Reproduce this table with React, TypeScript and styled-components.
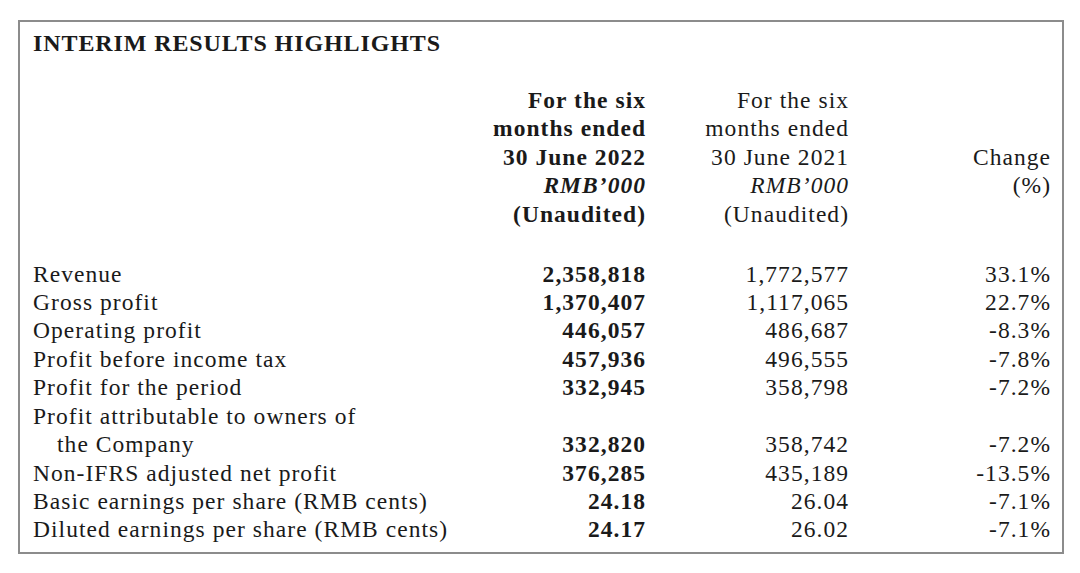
import React from "react";
import styled, { createGlobalStyle } from "styled-components";

const Global = createGlobalStyle`
  html, body { margin: 0; padding: 0; background: #ffffff; }
  body { font-family: "Liberation Serif", "Times New Roman", serif; color: #1a1a1a; }
`;

const Page = styled.div`
  padding: 20px 16px 0 18px;
`;

const Box = styled.section`
  box-sizing: border-box;
  width: 1046px;
  height: 534px;
  border: 2px solid #8c8c8c;
  padding: 7px 12px 0 13px;
`;

const Title = styled.h1`
  margin: 0;
  font-size: 24px;
  font-weight: 700;
  line-height: 28.44px;
  letter-spacing: 0.9px;
`;

const Table = styled.div`
  display: grid;
  grid-template-columns: minmax(0, 1fr) 200px 203px 202px;
  font-size: 23.5px;
  line-height: 28.44px;
  letter-spacing: 1.05px;
  margin-top: 28.4px;
`;

const HeadCell = styled.div<{ $bold?: boolean; $drop?: number }>`
  text-align: right;
  font-weight: ${(p) => (p.$bold ? 700 : 400)};
  align-self: end;
  margin-bottom: ${(p) => 31.5 + (p.$drop ?? 0)}px;
  margin-right: -1.05px;
`;

const Line = styled.div``;
const Ital = styled.div`
  font-style: italic;
`;

const Label = styled.div<{ $indent?: boolean }>`
  padding-left: ${(p) => (p.$indent ? "24px" : "0")};
  white-space: nowrap;
`;

const Num = styled.div<{ $bold?: boolean }>`
  text-align: right;
  font-weight: ${(p) => (p.$bold ? 700 : 400)};
  align-self: end;
  margin-right: -1.05px;
`;

type Row = { label: string; cont?: string; a: string; b: string; c: string };

const rows: Row[] = [
  { label: "Revenue", a: "2,358,818", b: "1,772,577", c: "33.1%" },
  { label: "Gross profit", a: "1,370,407", b: "1,117,065", c: "22.7%" },
  { label: "Operating profit", a: "446,057", b: "486,687", c: "-8.3%" },
  { label: "Profit before income tax", a: "457,936", b: "496,555", c: "-7.8%" },
  { label: "Profit for the period", a: "332,945", b: "358,798", c: "-7.2%" },
  { label: "Profit attributable to owners of", cont: "the Company", a: "332,820", b: "358,742", c: "-7.2%" },
  { label: "Non-IFRS adjusted net profit", a: "376,285", b: "435,189", c: "-13.5%" },
  { label: "Basic earnings per share (RMB cents)", a: "24.18", b: "26.04", c: "-7.1%" },
  { label: "Diluted earnings per share (RMB cents)", a: "24.17", b: "26.02", c: "-7.1%" },
];

export default function App() {
  return (
    <Page>
      <Global />
      <Box>
        <Title>INTERIM RESULTS HIGHLIGHTS</Title>
        <Table>
          <div />
          <HeadCell $bold>
            <Line>For the six</Line>
            <Line>months ended</Line>
            <Line>30 June 2022</Line>
            <Ital>RMB’000</Ital>
            <Line>(Unaudited)</Line>
          </HeadCell>
          <HeadCell>
            <Line>For the six</Line>
            <Line>months ended</Line>
            <Line>30 June 2021</Line>
            <Ital>RMB’000</Ital>
            <Line>(Unaudited)</Line>
          </HeadCell>
          <HeadCell $drop={28.44}>
            <Line>Change</Line>
            <Line>(%)</Line>
          </HeadCell>
          {rows.map((r) => (
            <React.Fragment key={r.label}>
              <Label>
                <Line>{r.label}</Line>
                {r.cont && <Label $indent>{r.cont}</Label>}
              </Label>
              <Num $bold>{r.a}</Num>
              <Num>{r.b}</Num>
              <Num>{r.c}</Num>
            </React.Fragment>
          ))}
        </Table>
      </Box>
    </Page>
  );
}
